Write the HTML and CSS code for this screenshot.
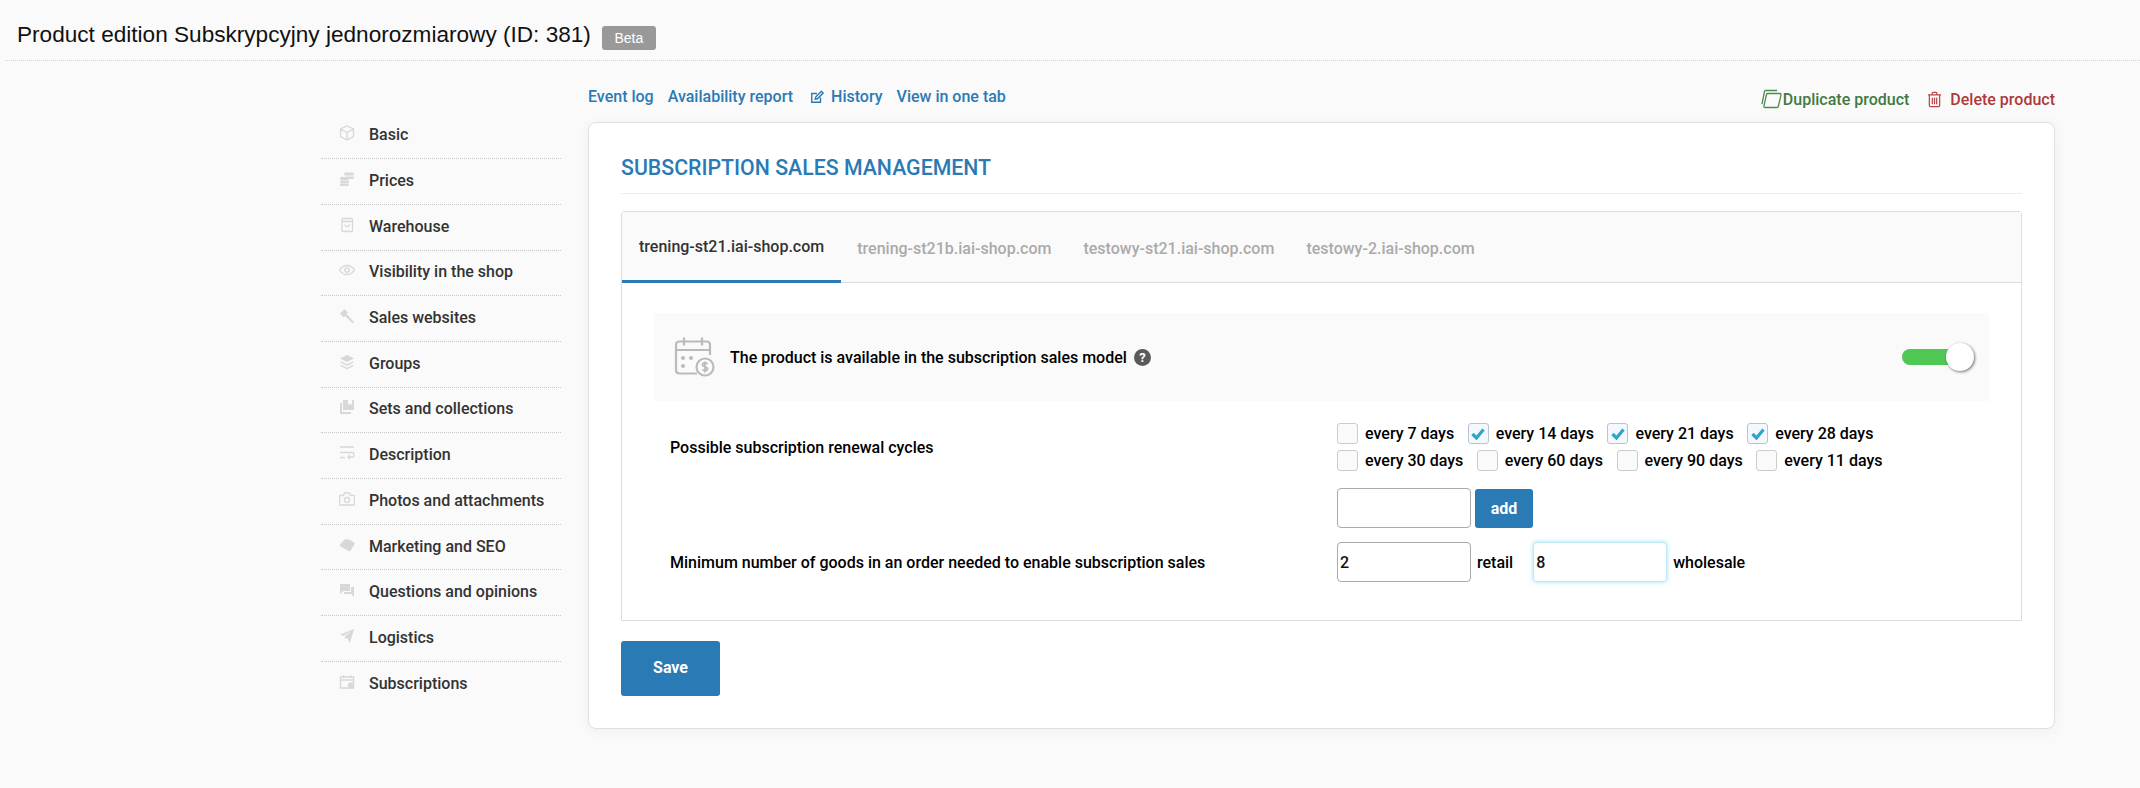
FILE: index.html
```html
<!DOCTYPE html>
<html lang="en">
<head>
  <meta charset="UTF-8" />
  <title>Product edition</title>
  <link rel="stylesheet" href="styles.css">
</head>
<body>
  <div class="page-header">
    <h1 class="page-title">Product edition Subskrypcyjny jednorozmiarowy (ID: 381)</h1>
    <span class="beta">Beta</span>
  </div>

  <div class="main">
    <ul class="side-menu">
      <li><svg viewBox="0 0 16 16"><path d="M8 1l6.500 3v7.500L8 15l-6.500-3.500V4zM1.500 4L8 7.500 14.500 4M8 7.500V15"/></svg>Basic</li>
      <li><svg viewBox="0 0 16 16"><g class="solid"><rect x="5" y="1.500" width="10" height="3" rx="1.500"/><rect x="6" y="5.500" width="9" height="2.500" rx="1.200"/><rect x="1" y="6" width="9" height="3" rx="1.500"/><rect x="1" y="9.500" width="9" height="2.500" rx="1.200"/><rect x="1" y="12.500" width="9" height="2.500" rx="1.200"/></g></svg>Prices</li>
      <li><svg viewBox="0 0 16 16"><path d="M3 2.500c0-.6.400-1 1-1h8.500c.6 0 1 .4 1 1v11c0 .6-.4 1-1 1H4c-.6 0-1-.4-1-1zM3 4.500h10.500M6 7.500c.5 3 4 3 4.500 0"/></svg>Warehouse</li>
      <li><svg viewBox="0 0 16 16"><path d="M.5 8c4-6 11-6 15 0-4 6-11 6-15 0z"/><circle cx="8" cy="8" r="2.200"/></svg>Visibility in the shop</li>
      <li><svg viewBox="0 0 16 16"><path class="solid" d="M1 5.500L5.500 1 9 4.500 7.500 6l7.500 8-1.300 1.200L6 8 4.500 9.500z"/></svg>Sales websites</li>
      <li><svg viewBox="0 0 16 16"><g class="solid"><path d="M8 1l7 3.500L8 8 1 4.500z"/><path d="M2.500 7.500L8 10.200l5.500-2.700L15 8.300 8 12 1 8.300z"/><path d="M2.500 11L8 13.700l5.500-2.700 1.500.8L8 15.500 1 11.800z"/></g></svg>Groups</li>
      <li><svg viewBox="0 0 16 16"><g class="solid"><path d="M4 1h11v10H4z"/><path d="M1 4h2v9h9v2H1z"/></g><path class="notch" d="M9 1h4v5l-2-1.500L9 6z"/></svg>Sets and collections</li>
      <li><svg viewBox="0 0 16 16"><path d="M1 2h14M1 7.500h12.500c2 0 2 4.500 0 4.500H9.500M11 10l-2 2 2 2M1 12.500h5"/></svg>Description</li>
      <li><svg viewBox="0 0 16 16"><path d="M1 4.500h3.500L5.500 2h5l1 2.500H15c.3 0 .5.200.5.500v8.500c0 .3-.2.500-.5.500H1c-.3 0-.5-.2-.5-.5V5c0-.3.200-.5.500-.5z"/><circle cx="8" cy="9" r="2.500"/></svg>Photos and attachments</li>
      <li><svg viewBox="0 0 16 16"><path class="solid" d="M1 7.500L5.500 2.500h5L15.500 6c.4.300.4.700.2 1l-4.500 7c-.3.400-.7.500-1.100.2L1.500 9.500C.8 9 .7 8 1 7.500z"/></svg>Marketing and SEO</li>
      <li><svg viewBox="0 0 16 16"><g class="solid"><path d="M1 2h10v7H4.500L1 12z"/><path d="M12 5h3v10l-3-3H5v-2h7z"/></g></svg>Questions and opinions</li>
      <li><svg viewBox="0 0 16 16"><path class="solid" d="M15 1L11 15 8 9.500 6 11.500V8.500L12 3 4.500 8 1 6.500z"/></svg>Logistics</li>
      <li><svg viewBox="0 0 16 16"><path d="M1.500 3h13v11h-13zM1.500 6h13M4.500 1v3M11.500 1v3"/><circle class="solid" cx="12" cy="11.500" r="3.200"/></svg>Subscriptions</li>
    </ul>

    <div class="content">
      <div class="top-links">
        <div class="links-left">
          <a href="#">Event log</a>
          <a href="#">Availability report</a>
          <a href="#" class="with-icon">
            <svg class="history-icon" viewBox="0 0 16 16"><path d="M12 8.500V14H2V4h6"/><path d="M6 10.500l.5-2.500L13 1.500l2 2L8.500 10z"/></svg>History
          </a>
          <a href="#">View in one tab</a>
        </div>
        <div class="links-right">
          <a href="#" class="duplicate">
            <svg viewBox="0 0 22 20"><path d="M2 15L4.500 2.500c.1-.6.500-1 1.100-1H17"/><path d="M5 18.500c-.8 0-1.300-.6-1.100-1.400L6.500 5.500c.2-.7.700-1 1.300-1H20c.7 0 1.200.6 1 1.300l-2.700 11.700c-.2.700-.7 1-1.300 1z"/></svg>Duplicate product
          </a>
          <a href="#" class="delete">
            <svg viewBox="0 0 16 18"><path d="M1 4h14M5.500 4V2.500c0-.6.400-1 1-1h3c.6 0 1 .4 1 1V4M2.500 4v11.500c0 .6.400 1 1 1h9c.6 0 1-.4 1-1V4M5.700 7v7M8 7v7M10.300 7v7"/></svg>Delete product
          </a>
        </div>
      </div>

      <div class="card">
        <h2 class="card-title">Subscription sales management</h2>

        <div class="tabs-box">
          <div class="tabs">
            <div class="tab active">trening-st21.iai-shop.com</div>
            <div class="tab">trening-st21b.iai-shop.com</div>
            <div class="tab">testowy-st21.iai-shop.com</div>
            <div class="tab">testowy-2.iai-shop.com</div>
          </div>

          <div class="tab-body">
            <div class="switch-row">
              <svg class="calendar-icon" viewBox="0 0 42 42"><path d="M37 19V9c0-2-1.500-3.500-3.500-3.500h-27C4.500 5.500 3 7 3 9v25c0 2 1.500 3.500 3.500 3.500H24M3 14h34M11 1.500v8M29 1.500v8"/><circle class="dot" cx="10" cy="22" r="2"/><circle class="dot" cx="18" cy="22" r="2"/><circle class="dot" cx="10" cy="30" r="2"/><circle cx="32" cy="31" r="8.500"/><path class="dollar" d="M34.500 28c-1-1.500-5-1.500-5 .8 0 2.700 5 1.200 5 4 0 2.300-4 2.200-5 .7M32 25.500v11"/></svg>
              <span class="switch-label">The product is available in the subscription sales model</span>
              <span class="help">?</span>
              <span class="toggle"><span class="knob"></span></span>
            </div>

            <div class="form-row cycles-row">
              <div class="form-label">Possible subscription renewal cycles</div>
              <div class="form-value">
                <div class="checks">
                  <label class="check"><span class="box"></span>every 7 days</label>
                  <label class="check"><span class="box on"><svg viewBox="0 0 14 12"><path d="M1.500 6l4 4 7-8.500"/></svg></span>every 14 days</label>
                  <label class="check"><span class="box on"><svg viewBox="0 0 14 12"><path d="M1.500 6l4 4 7-8.500"/></svg></span>every 21 days</label>
                  <label class="check"><span class="box on"><svg viewBox="0 0 14 12"><path d="M1.500 6l4 4 7-8.500"/></svg></span>every 28 days</label>
                </div>
                <div class="checks">
                  <label class="check"><span class="box"></span>every 30 days</label>
                  <label class="check"><span class="box"></span>every 60 days</label>
                  <label class="check"><span class="box"></span>every 90 days</label>
                  <label class="check"><span class="box"></span>every 11 days</label>
                </div>
              </div>
            </div>

            <div class="form-row add-row">
              <div class="form-label"></div>
              <div class="form-value inline">
                <input class="text-input" type="text">
                <button class="add-btn">add</button>
              </div>
            </div>

            <div class="form-row">
              <div class="form-label">Minimum number of goods in an order needed to enable subscription sales</div>
              <div class="form-value inline">
                <input class="text-input" type="text" value="2">
                <span class="unit">retail</span>
                <input class="text-input focused" type="text" value="8">
                <span class="unit">wholesale</span>
              </div>
            </div>
          </div>
        </div>

        <button class="save-btn">Save</button>
      </div>
    </div>
  </div>
</body>
</html>
```

FILE: styles.css
```css
* {
  margin: 0;
  padding: 0;
  box-sizing: border-box;
}

body {
  background: #fafafa;
  font-family: Roboto, Arial, sans-serif;
  height: 788px;
  overflow: hidden;
  color: #000;
}

a {
  text-decoration: none;
}

.page-header {
  height: 61px;
  margin-left: 5px;
  padding: 10px 0 0 12px;
  display: flex;
  align-items: center;
  border-bottom: 1px dotted #d4d4d4;
}

.page-title {
  font-family: "Liberation Sans", Arial, sans-serif;
  font-size: 22.6px;
  font-weight: 400;
  color: #111;
}

.beta {
  margin-left: 11px;
  margin-top: 6px;
  width: 54px;
  height: 24px;
  line-height: 24px;
  text-align: center;
  background: #999;
  color: #fff;
  border-radius: 3px;
  font-family: "Liberation Sans", Arial, sans-serif;
  font-size: 14px;
}

.main {
  display: flex;
  padding-left: 321px;
}

.side-menu {
  list-style: none;
  width: 240px;
  margin-top: 52.5px;
  margin-right: 27px;
}

.side-menu li {
  height: 45.7px;
  display: flex;
  align-items: center;
  padding-left: 18px;
  padding-bottom: 2px;
  font-size: 16px;
  font-weight: 500;
  color: #333;
  border-bottom: 1px dotted #c8c8c8;
}

.side-menu li:last-child {
  border-bottom: 0;
}

.side-menu svg {
  width: 16px;
  height: 16px;
  margin-right: 14px;
  margin-top: -3px;
  fill: none;
  stroke: #d8d8d8;
  stroke-width: 1.3;
}

.side-menu .solid {
  fill: #d8d8d8;
  stroke: none;
}

.side-menu .notch {
  fill: #fafafa;
  stroke: none;
}

.content {
  width: 1467px;
}

.top-links {
  height: 61px;
  display: flex;
  justify-content: space-between;
  align-items: center;
  font-size: 16px;
  font-weight: 500;
}

.links-left {
  display: flex;
  gap: 14px;
  margin-top: 10px;
}

.links-left a {
  color: #2a7ab5;
}

.with-icon {
  display: flex;
  align-items: center;
}

.history-icon {
  width: 14px;
  height: 14px;
  margin: 0 7px 0 3px;
  fill: none;
  stroke: #2a7ab5;
  stroke-width: 1.6;
}

.links-right {
  display: flex;
  gap: 18px;
  margin-top: 15px;
}

.links-right a {
  display: flex;
  align-items: center;
}

.duplicate {
  color: #3f7a42;
}

.duplicate svg {
  width: 22px;
  height: 20px;
  margin-right: 1px;
  fill: none;
  stroke: #4f8a52;
  stroke-width: 1.3;
}

.delete {
  color: #ad3a3a;
}

.delete svg {
  width: 15px;
  height: 17px;
  margin-right: 8px;
  fill: none;
  stroke: #b8474a;
  stroke-width: 1.3;
}

.card {
  height: 607px;
  background: #fff;
  border: 1px solid #e0e0e0;
  border-radius: 8px;
  padding: 0 32px;
  box-shadow: 0 2px 14px rgba(0, 0, 0, 0.05);
}

.card-title {
  height: 71px;
  padding-top: 32px;
  font-size: 21.3px;
  font-weight: 500;
  line-height: 26px;
  text-transform: uppercase;
  color: #2a7ab5;
  border-bottom: 1px solid #eee;
}

.tabs-box {
  margin-top: 17px;
  height: 410px;
  border: 1px solid #ddd;
  border-radius: 3px 3px 0 0;
}

.tabs {
  height: 71px;
  display: flex;
  background: #fafafa;
  border-bottom: 1px solid #ddd;
}

.tab {
  height: 71px;
  padding: 0 16px;
  line-height: 73px;
  font-size: 16px;
  font-weight: 500;
  color: #aaa;
}

.tab.active {
  padding: 0 17px;
  color: #333;
  line-height: 69px;
  border-bottom: 3px solid #2a7ab5;
}

.tab-body {
  padding: 30px 32px 0 32px;
}

.switch-row {
  height: 88px;
  display: flex;
  align-items: center;
  padding-left: 19px;
  background: #fafafa;
  font-size: 16px;
  font-weight: 500;
}

.calendar-icon {
  width: 42px;
  height: 42px;
  margin-right: 15px;
  fill: none;
  stroke: #bbb;
  stroke-width: 2.2;
}

.calendar-icon .dot {
  fill: #bbb;
  stroke: none;
}

.calendar-icon .dollar {
  stroke-width: 1.8;
}

.help {
  width: 17px;
  height: 17px;
  margin-left: 7px;
  border-radius: 50%;
  background: #5a5a5a;
  color: #fff;
  font-size: 13px;
  font-weight: 700;
  line-height: 17px;
  text-align: center;
}

.toggle {
  position: relative;
  width: 58px;
  height: 16px;
  margin-left: auto;
  margin-right: 29px;
  background: #50c655;
  border-radius: 8px;
}

.knob {
  position: absolute;
  right: -14px;
  top: -6px;
  width: 28px;
  height: 28px;
  background: #fff;
  border-radius: 50%;
  box-shadow: 1px 1px 3px rgba(0, 0, 0, 0.55);
}

.form-row {
  display: flex;
  align-items: center;
  font-size: 16px;
  font-weight: 500;
}

.form-label {
  width: 683px;
  padding-left: 16px;
}

.cycles-row {
  margin-top: 19px;
}

.checks {
  display: flex;
  height: 27px;
  align-items: center;
}

.check {
  display: flex;
  align-items: center;
  margin-right: 13.5px;
}

.box {
  display: flex;
  align-items: center;
  justify-content: center;
  width: 21px;
  height: 21px;
  margin-right: 7px;
  background: #fafafa;
  border: 1px solid #ccc;
  border-radius: 3px;
}

.box.on {
  background: #f4f7fb;
  border-color: #b8c4d4;
}

.box svg {
  width: 14px;
  height: 12px;
  fill: none;
  stroke: #2ba6cf;
  stroke-width: 3.2;
}

.add-row {
  margin-top: 14px;
}

.add-row + .form-row {
  margin-top: 14px;
}

.inline {
  display: flex;
  align-items: center;
}

.text-input {
  width: 134px;
  height: 40px;
  padding-left: 2px;
  background: #fff;
  border: 1px solid #aaa;
  border-radius: 4px;
  outline: none;
  font-family: Roboto, Arial, sans-serif;
  font-size: 16px;
  font-weight: 500;
  color: #111;
}

.text-input.focused {
  border-color: #bfeaf7;
  box-shadow: 0 0 4px rgba(90, 200, 240, 0.6);
}

.add-btn {
  width: 58px;
  height: 39px;
  margin-left: 4px;
  background: #2a7ab5;
  color: #fff;
  border: 0;
  border-radius: 3px;
  font-family: Roboto, Arial, sans-serif;
  font-size: 16px;
  font-weight: 700;
}

.unit {
  margin: 0 20px 0 6px;
}

.save-btn {
  display: block;
  width: 99px;
  height: 55px;
  margin-top: 20px;
  padding-bottom: 2px;
  background: #2a7ab5;
  color: #fff;
  border: 0;
  border-radius: 3px;
  font-family: Roboto, Arial, sans-serif;
  font-size: 16px;
  font-weight: 700;
}
```
